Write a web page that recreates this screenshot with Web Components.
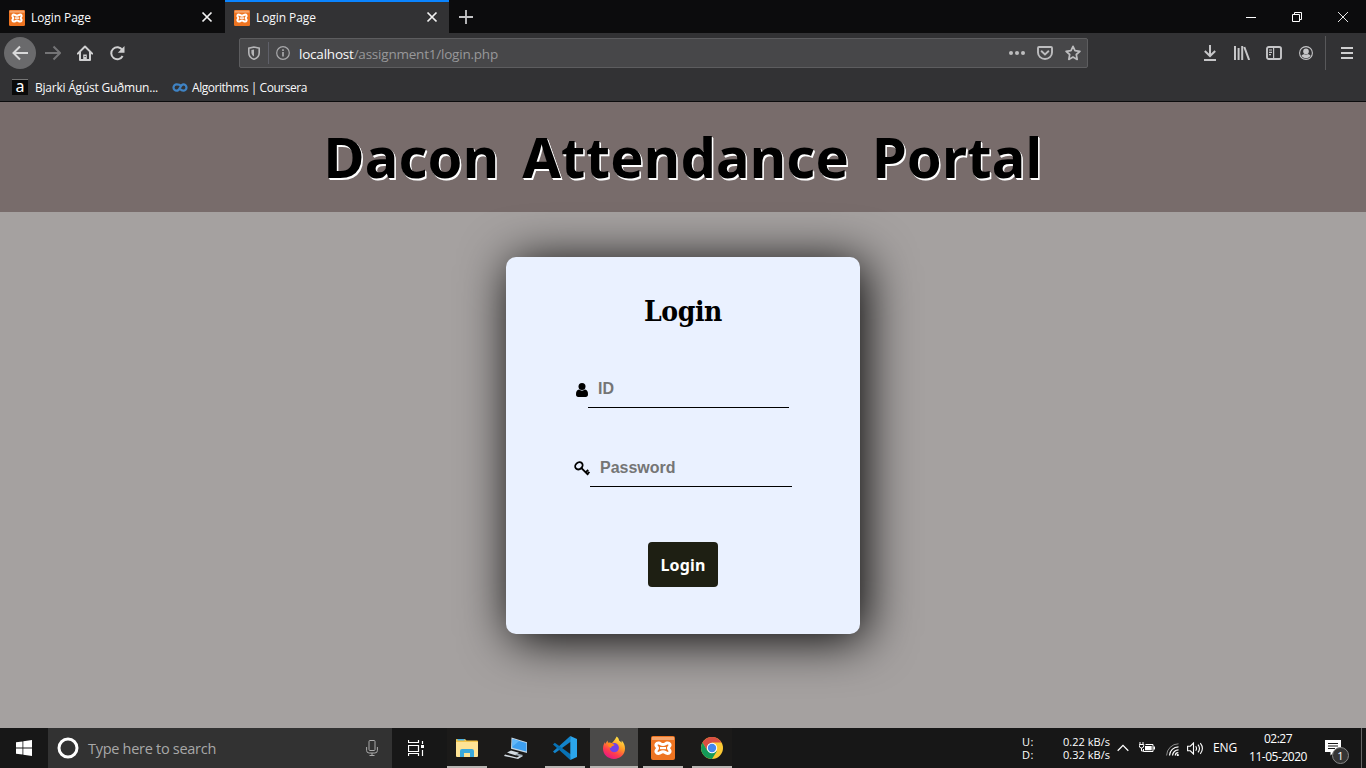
<!DOCTYPE html>
<html lang="en">
<head>
<meta charset="utf-8">
<title>Login Page</title>
<style>
html,body{margin:0;height:100%;overflow:hidden}
body{font-family:"Open Sans","Noto Sans",sans-serif;font-size:12px;color:#f9f9fa;background:#a5a1a0}
</style>
</head>
<body>
<desktop-screen></desktop-screen>
<script>
const define = (name, html, setup) => customElements.define(name, class extends HTMLElement {
  constructor() {
    super();
    this.attachShadow({ mode: 'open' }).innerHTML = html;
  }
  connectedCallback() { if (setup) setup(this, this.shadowRoot); }
});

const XAMPP = '<rect width="24" height="24" rx="2" fill="#ee7421"/><path d="M1 1h22v3H1z" fill="#f6a56c"/><g fill="none" stroke="#fff" stroke-width="3"><path d="M8 7C5.500 6.500 3.800 8.800 6 11c.7.700.7 1.500 0 2.200-2.200 2.300-.5 4.600 2 4.100 1.500-.3 1.800-1.500 4-1.500s2.500 1.200 4 1.500c2.500.5 4.200-1.800 2-4.100-.7-.7-.7-1.500 0-2.200 2.200-2.200.5-4.500-2-4-1.500.3-1.800 1.500-4 1.500S9.500 7.300 8 7z"/><path d="M9 12.100h6" stroke-width="2.200"/></g>';

// name: [width, height, viewBox, markup]
const ICONS = {
  xamppSmall: [16, 16, '0 0 24 24', XAMPP],
  xampp: [24, 24, '0 0 24 24', XAMPP],
  close: [12, 12, '0 0 12 12', '<path d="M1.500 1.500l9 9m0-9l-9 9" stroke="#f2f2f2" stroke-width="1.700"/>'],
  plus: [14, 14, '0 0 14 14', '<path d="M7 0v14M0 7h14" stroke="#c4c4c6" stroke-width="1.800"/>'],
  min: [10, 10, '0 0 10 10', '<path d="M0 5.500h10" stroke="#fff"/>'],
  restore: [10, 10, '0 0 10 10', '<path d="M.5 2.500h7v7h-7zM2.500 2.500v-2h7v7h-2" fill="none" stroke="#fff"/>'],
  winclose: [10, 10, '0 0 10 10', '<path d="M0 0l10 10M10 0L0 10" stroke="#fff" stroke-width=".9"/>'],
  back: [16, 16, '0 0 16 16', '<path d="M8 1.500L1.500 8 8 14.500M1.500 8H16" fill="none" stroke="#d8d8d9" stroke-width="2"/>'],
  fwd: [16, 16, '0 0 16 16', '<path d="M8.500 1.500L15 8l-6.500 6.500M15 8H0" fill="none" stroke="#747476" stroke-width="2"/>'],
  home: [16, 16, '0 0 16 16', '<path d="M.8 8.600L8 1.500l7.200 7.100M3 7v8h10V7" fill="none" stroke="#cfcfd0" stroke-width="2" stroke-linecap="round" stroke-linejoin="round"/><path d="M6.200 15V9.500h3.600V15z" fill="#cfcfd0"/><path d="M7.500 11.500h1.200" stroke="#323234"/>'],
  reload: [16, 16, '0 0 16 16', '<path d="M13.300 5A6 6 0 1 0 13.600 11" fill="none" stroke="#cfcfd0" stroke-width="2"/><path d="M15.500 1v6.700H8.800z" fill="#cfcfd0"/>'],
  shield: [14, 14, '0 0 14 14', '<path d="M7 1L1.800 2.200v4.500C1.800 10 4 12.300 7 13.300c3-1 5.200-3.300 5.200-6.600V2.200z" fill="none" stroke="#b5b5b7" stroke-width="1.600"/><path d="M7 3.500v7C5.300 9.600 4.400 8.300 4.400 6.500V4.100z" fill="#b5b5b7"/>'],
  info: [14, 14, '0 0 14 14', '<circle cx="7" cy="7" r="6.300" fill="none" stroke="#a9a9ab" stroke-width="1.200"/><path d="M7 6v4.500M7 3.200v1.800" stroke="#a9a9ab" stroke-width="1.700"/>'],
  dots: [16, 4, '0 0 16 4', '<g fill="#bdbdbf"><circle cx="2" cy="2" r="2"/><circle cx="8" cy="2" r="2"/><circle cx="14" cy="2" r="2"/></g>'],
  pocket: [16, 16, '0 0 16 16', '<path d="M2 2h12a1 1 0 0 1 1 1v4.500a7 6.500 0 0 1-14 0V3a1 1 0 0 1 1-1z" fill="none" stroke="#bdbdbf" stroke-width="1.900"/><path d="M4.600 6.300L8 9.400l3.400-3.100" fill="none" stroke="#bdbdbf" stroke-width="1.900" stroke-linecap="round"/>'],
  star: [16, 16, '0 0 16 16', '<path d="M8 1.300l2 4.400 4.900.6-3.600 3.200.9 4.900L8 12l-4.200 2.400.9-4.900L1.100 6.300 6 5.700z" fill="none" stroke="#bdbdbf" stroke-width="1.700" stroke-linejoin="round"/>'],
  download: [14, 16, '0 0 14 16', '<path d="M7 0v10.500M1.800 6L7 11l5.200-5M1 15h12" fill="none" stroke="#c6c6c8" stroke-width="2"/>'],
  library: [16, 14, '0 0 16 14', '<path d="M1 0v14M4.600 2v12M8.200 0v14M10.300 1l4.800 13" fill="none" stroke="#c6c6c8" stroke-width="2"/>'],
  sidebar: [16, 14, '0 0 16 14', '<rect x="1" y="1" width="14" height="12" rx="1.800" fill="none" stroke="#c6c6c8" stroke-width="1.900"/><path d="M7.600 1v12M3 4h3M3 6.300h3M3 8.600h2" stroke="#c6c6c8" stroke-width="1.200"/>'],
  account: [14, 14, '0 0 14 14', '<circle cx="7" cy="7" r="6.400" fill="none" stroke="#c6c6c8" stroke-width="1.100"/><circle cx="7" cy="5.400" r="2.800" fill="#c6c6c8"/><path d="M2.400 9.800c1-1.200 2-1.500 3-1.500.7.500 2.500.5 3.200 0 1 0 2 .3 3 1.500-1 1.600-2.600 2.300-4.600 2.300s-3.600-.7-4.600-2.300z" fill="#c6c6c8"/>'],
  menu: [12, 12, '0 0 12 12', '<path d="M0 1h12M0 6h12M0 11h12" stroke="#cfcfd0" stroke-width="2"/>'],
  coursera: [16, 9, '0 0 16 9', '<path d="M9.200 2.700C8 1.600 6.500 1.300 4.700 1.300a3.200 3.200 0 0 0 0 6.400c3.600 0 3.200-6.400 6.600-6.400a3.200 3.200 0 0 1 0 6.400c-1.500 0-2.300-.6-3-1.600" fill="none" stroke="#3f83c4" stroke-width="2.200"/>'],
  user: [12, 14, '0 0 12 14', '<circle cx="6" cy="3.600" r="3.500"/><path d="M3 6.600C1 6.900 0 8.500 0 11.300 0 13 .8 14 2.300 14h7.400c1.500 0 2.300-1 2.300-2.700 0-2.800-1-4.400-3-4.700-1.800 1.500-4.200 1.500-6 0z"/>'],
  key: [16, 15, '0 0 16 15', '<ellipse cx="4.900" cy="4.800" rx="4" ry="3.300" transform="rotate(-42 4.900 4.800)" fill="none" stroke="#000" stroke-width="1.900"/><path d="M7.200 6.800l7 7M11.700 11.300l2.500-2.500M13.400 12.900l2-2" fill="none" stroke="#000" stroke-width="1.900"/>'],
  windows: [16, 16, '0 0 16 16', '<path d="M0 2.300l6.500-.9v6.200H0zM7.300 1.300L16 0v7.600H7.300zM0 8.400h6.500v6.200L0 13.700zM7.300 8.400H16V16l-8.700-1.300z" fill="#fff"/>'],
  cortana: [22, 22, '0 0 22 22', '<circle cx="11" cy="11" r="9" fill="none" stroke="#fff" stroke-width="3"/>'],
  mic: [12, 16, '0 0 12 16', '<rect x="3" y=".5" width="6" height="10" rx="1" fill="none" stroke="#aaa"/><path d="M.6 7v3.500a2.500 2.500 0 0 0 2.500 2.500h5.800a2.500 2.500 0 0 0 2.500-2.500V7M6 13v2.500M3.500 15.500h5" fill="none" stroke="#aaa"/>'],
  taskview: [16, 16, '0 0 16 16', '<path d="M.5 0v2.500h10V0M.5 5.500h10v6H.5zM.5 16v-2.500h10V16M14.500 1v3M14.500 10v6" fill="none" stroke="#fff" stroke-width="1.200"/><path d="M13 5h3v3h-3z" fill="#fff"/>'],
  explorer: [22, 20, '0 0 22 20', '<path d="M0 1.500Q0 1 .5 1H9l1.500 1.500H21q1 0 1 1V18H0z" fill="#f3c54c"/><path d="M1.500 1h7v1.500h-7z" fill="#4aaee0"/><path d="M0 4h22v14q0 1-1 1H1q-1 0-1-1z" fill="#fee395"/><path d="M4 19v-6q0-2 2-2h10q2 0 2 2v6h-4v-4H8v4z" fill="#3aa9dc"/>'],
  pc: [24, 24, '0 0 24 24', '<path d="M7.500 1.500L23 6.300V17L7 12.800z" fill="#c6d7e4"/><path d="M8.600 3L22.500 7.100v8.500L8.200 11.800z" fill="#3d9ff0"/><path d="M8.600 3l6.500 2-7 6z" fill="#62b8fa"/><path d="M7 14.500l8 2.200-3.500 2.500-8.500-2.600zM1 18.500l12 3 4-2.500 2 1-5 3L0 20z" fill="#d4dce2"/><path d="M13 17.500l6 1.500-2 1.500-6-1.500z" fill="#9eabb5"/>'],
  vscode: [24, 24, '0 0 24 24', '<path d="M17.300 0L2 13.700 0 15.500l1.800 1.800L18 5.500z" fill="#1384cb"/><path d="M17.300 24L2 10.300 0 8.500l1.800-1.800L18 18.500z" fill="#0872b5"/><path d="M17.300 0L24 3v18l-6.700 3z" fill="#2ba6ed"/>'],
  firefox: [24, 24, '0 0 24 24', '<defs><linearGradient id="f" x1=".8" y1="0" x2=".25" y2="1"><stop offset="0" stop-color="#fff44f"/><stop offset=".4" stop-color="#ff9a25"/><stop offset=".7" stop-color="#ff3d4c"/><stop offset="1" stop-color="#e5128c"/></linearGradient></defs><path d="M14.700.5c1.600 1.300 2.300 2.700 2.500 4.300 1.200.5 2 1.300 2.300 2.100l.2-2.300c2.200 2.100 3.300 5 3.300 8 0 6-4.900 10.400-11 10.400S1 18.600 1 12.600c0-2.700.8-4.900 2-6.700L3.200 8 5.500 4.500 6 6.800c1.200-.4 2.700-.3 4 .3 1.900-2.300 3.400-3.900 4.700-6.600z" fill="url(#f)"/><circle cx="12.300" cy="11.700" r="4.600" fill="#7142e8"/><path d="M6 7.300c2.700-.8 5 .2 6.700 1.800l-3 1.300-.8 1.500c-1.700-.3-3-1.800-2.900-4.600z" fill="#ff8a16"/>'],
  chrome: [22, 22, '0 0 22 22', '<circle cx="11" cy="11" r="11" fill="#fcc934"/><path d="M11 5.500h9.500A11 11 0 0 0 1.500 5.500L6 13z" fill="#d94f43"/><path d="M11 22l5-8-5 2-5-3L1.500 5.500A11 11 0 0 0 11 22z" fill="#149a59"/><circle cx="11" cy="11" r="5.200" fill="#fff"/><circle cx="11" cy="11" r="4.200" fill="#4587ee"/>'],
  chevron: [12, 8, '0 0 12 8', '<path d="M.7 6.700L6 1.400l5.300 5.300" fill="none" stroke="#fff" stroke-width="1.300"/>'],
  battery: [16, 12, '0 0 16 12', '<path d="M6.500 2.500H14v7H4.500V7" fill="none" stroke="#fff"/><path d="M6 4h6.700v4.200H6zM14.500 4.500H16v3h-1.500z" fill="#fff"/><path d="M1 0v2.500M4 0v2.500M.3 2.500h4.400v1.300a2.200 2.200 0 0 1-4.400 0zM2.500 6v3h2" fill="none" stroke="#fff"/>'],
  wifi: [13, 13, '0 0 13 13', '<path d="M.6 12.500A12 12 0 0 1 12.500.8" fill="none" stroke="#8d8d8d"/><path d="M3.500 12.500a9 9 0 0 1 9-8.700M6.500 12.500a6 6 0 0 1 6-5.700" fill="none" stroke="#fff" stroke-width="1.200"/><path d="M9.300 12.500a3 3 0 0 1 3-2.900" fill="none" stroke="#fff" stroke-width="1.200"/><circle cx="11.800" cy="12" r="1.100" fill="#fff"/>'],
  sound: [17, 13, '0 0 17 13', '<path d="M.6 4.200h2.700L6.500 1v11L3.300 8.800H.6zM8.700 4.200q1.600 2.300 0 4.600M11 2.700q3 3.800 0 7.600M13.300 1.200q4.200 5.300 0 10.600" fill="none" stroke="#fff" stroke-width="1.100"/>'],
  notes: [16, 16, '0 0 16 16', '<path d="M0 0h16v12H9l-3.500 3.500V12H0z" fill="#fff"/><path d="M3 3.500h10M3 6h10M3 8.500h7" stroke="#181818"/>']
};

define('ui-icon', '<style>:host{display:flex;align-items:center;justify-content:center;flex:none}svg{display:block}</style><svg></svg>', (el, root) => {
  const icon = ICONS[el.getAttribute('name')];
  if (!icon) return;
  const [w, h, box, body] = icon;
  const svg = root.querySelector('svg');
  svg.setAttribute('width', w);
  svg.setAttribute('height', h);
  svg.setAttribute('viewBox', box);
  svg.innerHTML = body;
});

// A single line of text, tracked out or in to fill the width in its "w" attribute.
define('fit-text', '<style>:host{display:block;flex:none;white-space:nowrap;line-height:1.4}span{display:inline-block}</style><span><slot></slot></span>', (el, root) => {
  const w = +el.getAttribute('w');
  el.style.width = w + 'px';
  const fit = () => {
    const span = root.querySelector('span');
    const nodes = root.querySelector('slot').assignedNodes({ flatten: true });
    const count = nodes.map(n => n.textContent).join('').trim().length;
    span.style.letterSpacing = '0';
    const natural = span.getBoundingClientRect().width;
    if (natural && count) span.style.letterSpacing = (w - natural) / count + 'px';
  };
  window.addEventListener('load', fit);
});

define('browser-tab', `<style>
:host{display:flex;box-sizing:border-box;height:33px;width:225px;padding:2px 12px 0 9px;align-items:center}
:host([active]){width:224px;background:#323234;border-top:2px solid #0a84ff;padding-top:0;padding-right:11px}
fit-text{margin:2px auto 0 6px}
.x{margin-top:-1px}
</style><ui-icon name="xamppSmall"></ui-icon><fit-text w="60"><slot></slot></fit-text><ui-icon class="x" name="close"></ui-icon>`);

define('tab-strip', `<style>
:host{display:flex;height:33px;background:#0c0c0d;align-items:center}
.add{width:34px}.space{flex:1}
.win{width:46px}
</style><browser-tab>Login Page</browser-tab><browser-tab active>Login Page</browser-tab><ui-icon class="add" name="plus"></ui-icon><div class="space"></div>
<ui-icon class="win" name="min"></ui-icon><ui-icon class="win" name="restore"></ui-icon><ui-icon class="win" name="winclose"></ui-icon>`);

define('nav-bar', `<style>
:host{display:flex;height:40px;align-items:center;padding-left:4px;box-sizing:border-box}
.b{width:32px;height:32px}
.back{background:#6a6a6c;border-radius:50%;margin-right:1px}
.url{display:flex;align-items:center;box-sizing:border-box;width:849px;height:30px;margin:0 106px 0 106px;background:#474749;border:1px solid #5d5d5f;border-radius:2px;font-size:13.500px;color:#98989a}
.url b{font-weight:400;color:#f9f9fa}
.url .a{width:28px}
.line{width:1px;height:22px;background:#5f6069}
.sep{width:1px;height:34px;background:#58585a;margin:0 5px 0 3px}
fit-text{margin:2px auto 0 2px}
</style>
<ui-icon class="b back" name="back"></ui-icon><ui-icon class="b" name="fwd"></ui-icon><ui-icon class="b" name="home"></ui-icon><ui-icon class="b" name="reload"></ui-icon>
<div class="url"><ui-icon class="a" name="shield"></ui-icon><div class="line"></div><ui-icon class="a" name="info"></ui-icon><fit-text w="199"><b>localhost</b>/assignment1/login.php</fit-text><ui-icon class="a" name="dots"></ui-icon><ui-icon class="a" name="pocket"></ui-icon><ui-icon class="a" name="star"></ui-icon></div>
<ui-icon class="b" name="download"></ui-icon><ui-icon class="b" name="library"></ui-icon><ui-icon class="b" name="sidebar"></ui-icon><ui-icon class="b" name="account"></ui-icon><div class="sep"></div><ui-icon class="b" name="menu"></ui-icon>`);

define('bookmark-bar', `<style>
:host{display:flex;height:28px;align-items:center;padding-left:12px}
.a{width:16px;height:16px;background:#0a0a0a;border-top:1px solid #777;box-sizing:border-box;font:16px/12px "Noto Sans",sans-serif;text-align:center;color:#fff}
fit-text{margin:3px 14px 0 7px}fit-text:last-child{margin-left:4px}
ui-icon{margin-top:1px}
</style><div class="a">a</div><fit-text w="123">Bjarki Ágúst Guðmun...</fit-text><ui-icon name="coursera"></ui-icon><fit-text w="115">Algorithms | Coursera</fit-text>`);

define('browser-chrome', `<style>:host{display:block;box-sizing:border-box;height:102px;background:#323234;border-bottom:1px solid #0c0c0d}</style>
<tab-strip></tab-strip><nav-bar></nav-bar><bookmark-bar></bookmark-bar>`);

define('portal-banner', `<style>
:host{display:flex;height:110px;background:#786c6b;color:#000;justify-content:center;align-items:center}
fit-text{font:bold 56px/76px "Noto Sans",sans-serif;word-spacing:8px;text-shadow:1px 1px 0 #fff,1.500px 1.500px 0 #fff;margin-top:-2px;line-height:76px}
</style><fit-text w="719"><slot></slot></fit-text>`);

define('login-field', `<style>
:host{display:flex;justify-content:center;align-items:center;height:38px}
.in{box-sizing:border-box;width:201px;height:38px;border-bottom:1px solid #000;padding:0 10px;font:bold 16px/37px "Liberation Sans",Arial,sans-serif;color:#757575}
:host(.pw) .in{width:202px}
::slotted(ui-icon){margin-top:1px}
</style><slot name="icon"></slot><div class="in"><slot></slot></div>`);

define('login-card', `<style>
:host{display:flex;flex-direction:column;align-items:center;box-sizing:border-box;width:354px;height:377px;margin:45px auto 0;padding-top:35px;border-radius:10px;background:#eaf1ff;color:#000;box-shadow:5px 5px 50px #000}
.h{font:bold 28px/40px "DejaVu Serif Condensed","DejaVu Serif",serif;line-height:40px}
.id{margin:38px 1px 0 0}
.pw{margin-top:41px}
.btn{display:flex;align-items:center;justify-content:center;width:70px;height:45px;margin-top:55px;background:#1e1f13;border-radius:4px;color:#fff;font:bold 16px "Noto Sans",sans-serif}
.btn fit-text{margin-top:2px}
</style><fit-text class="h" w="78">Login</fit-text>
<login-field class="id"><ui-icon slot="icon" name="user"></ui-icon>ID</login-field><login-field class="pw"><ui-icon slot="icon" name="key"></ui-icon>Password</login-field>
<div class="btn"><fit-text w="45">Login</fit-text></div>`);

define('task-button', `<style>
:host{display:flex;box-sizing:border-box;width:40px;height:40px;justify-content:center;align-items:center;border-bottom:2px solid transparent;padding-top:2px}
:host([open]){border-color:#b8b5b2}
:host([active]){width:48px;background:#4b4a49}
</style><slot></slot>`);

define('task-bar', `<style>
:host{display:flex;height:40px;background:#171717;align-items:center;color:#fff}
.start{width:48px}
.search{display:flex;align-items:center;box-sizing:border-box;width:344px;height:40px;background:#323232;padding:0 14px 0 9px;font-size:14.500px;color:#a8a8a8}
.search fit-text{margin:2px auto 0 9px}
.view{width:48px}
.apps{display:flex;margin-left:7px;background:#1b1a19}
.net{display:grid;grid-template-columns:41px 47px;line-height:13px;font-size:11px;margin-right:7px}
.net fit-text{line-height:13px}
.space{flex:1}
.clock{display:flex;flex-direction:column;align-items:center;gap:1px;width:60px;margin:-2px 17px 0 11px}
.clock fit-text{line-height:17px}
.note{position:relative;width:16px;margin-right:20px}
.badge{position:absolute;left:7px;top:7px;width:15px;height:15px;border:1px solid #888;border-radius:50%;background:#353535;text-align:center;font-size:11px;line-height:15px}
.end{width:1px;height:40px;background:#666;margin-right:4px}
</style>
<ui-icon class="start" name="windows"></ui-icon>
<div class="search"><ui-icon name="cortana"></ui-icon><fit-text w="128">Type here to search</fit-text><ui-icon name="mic"></ui-icon></div>
<ui-icon class="view" name="taskview"></ui-icon>
<div class="apps">
<task-button open><ui-icon name="explorer"></ui-icon></task-button>
<task-button style="margin-left:9px"><ui-icon name="pc"></ui-icon></task-button>
<task-button open style="margin-left:9px"><ui-icon name="vscode"></ui-icon></task-button>
<task-button open active style="margin-left:5px"><ui-icon name="firefox"></ui-icon></task-button>
<task-button open style="margin-left:5px"><ui-icon name="xampp"></ui-icon></task-button>
<task-button open style="margin-left:9px"><ui-icon name="chrome"></ui-icon></task-button>
</div>
<div class="space"></div>
<div class="net"><fit-text w="12">U:</fit-text><fit-text w="47">0.22 kB/s</fit-text><fit-text w="12">D:</fit-text><fit-text w="47">0.32 kB/s</fit-text></div>
<ui-icon name="chevron"></ui-icon><ui-icon name="battery" style="margin-left:10px"></ui-icon><ui-icon name="wifi" style="margin-left:11px;margin-top:2px"></ui-icon><ui-icon name="sound" style="margin-left:8px"></ui-icon>
<fit-text w="24" style="margin-left:9px">ENG</fit-text>
<div class="clock"><fit-text w="28">02:27</fit-text><fit-text w="58">11-05-2020</fit-text></div>
<div class="note"><ui-icon name="notes"></ui-icon><div class="badge">1</div></div>
<div class="end"></div>`);

define('desktop-screen', `<style>
:host{display:flex;flex-direction:column;width:1366px;height:768px;overflow:hidden}
main{flex:1;background:#a5a1a0;display:flow-root}
</style><browser-chrome></browser-chrome><main><portal-banner>Dacon Attendance Portal</portal-banner><login-card></login-card></main><task-bar></task-bar>`);
</script>
</body>
</html>
